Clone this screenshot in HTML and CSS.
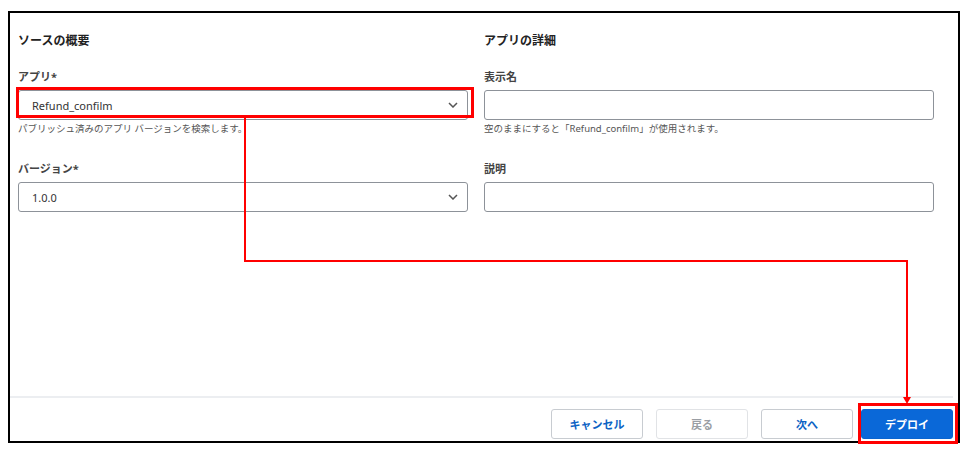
FILE: index.html
```html
<!doctype html>
<html>
<head>
<meta charset="utf-8">
<title>デプロイ</title>
<link rel="stylesheet" href="styles.css">
</head>
<body>
<div class="frame">
    <div class="cols">
        <div class="col">
            <h2 class="title">ソースの概要</h2>
            <div class="label">アプリ*</div>
            <div class="select">
                <span>Refund_confilm</span>
                <svg class="chev" width="10" height="6" viewBox="0 0 10 6"><path d="M1 1 L5 5 L9 1" fill="none" stroke="#555" stroke-width="1.5"/></svg>
            </div>
            <div class="help">パブリッシュ済みのアプリ バージョンを検索します。</div>
            <div class="label second">バージョン*</div>
            <div class="select">
                <span>1.0.0</span>
                <svg class="chev" width="10" height="6" viewBox="0 0 10 6"><path d="M1 1 L5 5 L9 1" fill="none" stroke="#555" stroke-width="1.5"/></svg>
            </div>
        </div>
        <div class="col">
            <h2 class="title">アプリの詳細</h2>
            <div class="label">表示名</div>
            <div class="input"></div>
            <div class="help">空のままにすると「Refund_confilm」が使用されます。</div>
            <div class="label second">説明</div>
            <div class="input"></div>
        </div>
    </div>
    <div class="footer">
        <button class="btn">キャンセル</button>
        <button class="btn disabled">戻る</button>
        <button class="btn">次へ</button>
        <button class="btn primary">デプロイ</button>
    </div>
</div>

<!-- 注釈 -->
<div class="mark mark-app"></div>
<div class="mark mark-deploy"></div>
<svg class="arrow" width="967" height="456" viewBox="0 0 967 456">
    <path d="M245 117 V261 H907 V397" fill="none" stroke="#f00" stroke-width="2"/>
    <path d="M903 397 L911 397 L907 404 Z" fill="#f00"/>
</svg>
</body>
</html>
```

FILE: styles.css
```css
body{
    margin:0;
    background:#fff;
    font-family:"Noto Sans","Noto Sans CJK JP",sans-serif;
    color:#333;
}
.frame{
    width:948px;
    height:428px;
    margin:11px 0 0 8px;
    border:2px solid #000;
    display:flex;
    flex-direction:column;
}
.cols{
    flex:1;
    display:flex;
    gap:16px;
    padding:20px 0 0 8px;
}
.col{
    width:450px;
}
.title{
    margin:0;
    font-size:12px;
    line-height:16px;
    font-weight:bold;
    color:#222;
}
.label{
    margin-top:20px;
    font-size:11px;
    line-height:16px;
    font-weight:bold;
    color:#444;
}
.label.second{
    margin-top:25px;
}
.select,
.input{
    box-sizing:border-box;
    height:30px;
    margin-top:5px;
    border:1px solid #8d9299;
    border-radius:3px;
    background:#fff;
}
.select{
    display:flex;
    align-items:center;
    justify-content:space-between;
    padding:0 9px 0 13px;
    font-size:11px;
    color:#333;
}
.help{
    margin-top:2px;
    font-size:9.5px;
    line-height:14px;
    color:#555;
}
.footer{
    height:45px;
    margin-right:5px;
    border-top:2px solid #eceef1;
    box-sizing:border-box;
    display:flex;
    justify-content:flex-end;
    align-items:flex-start;
    gap:13px;
    padding-top:11px;
}
.btn{
    width:92px;
    height:30px;
    border:1px solid #c8ccd1;
    border-radius:3px;
    background:#fff;
    font-family:inherit;
    font-size:11px;
    font-weight:bold;
    color:#0b62c4;
    cursor:pointer;
}
.btn.disabled{
    border-color:#e1e3e6;
    color:#9a9ea4;
    cursor:default;
}
.btn.primary{
    margin-left:-5px;
    border-color:#0a64cf;
    background:#0a68d8;
    color:#fff;
}
.mark{
    position:absolute;
    box-sizing:border-box;
    border:3px solid #f00;
}
.mark-app{
    left:16px;
    top:87px;
    width:458px;
    height:31px;
}
.mark-deploy{
    left:858px;
    top:403px;
    width:100px;
    height:41px;
}
.arrow{
    position:absolute;
    left:0;
    top:0;
    pointer-events:none;
}
```
